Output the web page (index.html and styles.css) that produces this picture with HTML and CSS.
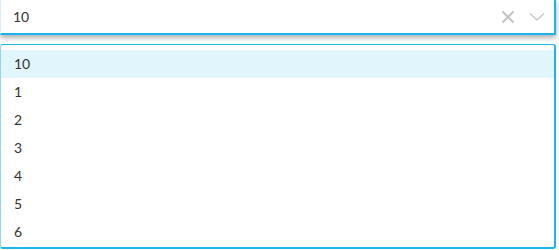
FILE: index.html
```html
<!DOCTYPE html>
<html lang="en">

<head>
  <meta charset="UTF-8" />
  <meta name="viewport" content="width=device-width, initial-scale=1.0" />
  <title>Select</title>
  <link rel="stylesheet" href="styles.css">
</head>

<body>
  <div class="select">
    <div class="select-input">
      <span class="value">10</span>
      <span class="icons">
        <svg class="clear" width="14" height="14" viewBox="0 0 14 14">
          <path d="M1.5 1.5 L12.5 12.5 M12.5 1.5 L1.5 12.5" stroke="#c4c4c4" stroke-width="2" fill="none" />
        </svg>
        <svg class="arrow" width="16" height="10" viewBox="0 0 16 10">
          <path d="M1 1.5 L8 8 L15 1.5" stroke="#c8c8c8" stroke-width="1.4" fill="none" />
        </svg>
      </span>
    </div>

    <ul class="options">
      <li class="active">10</li>
      <li>1</li>
      <li>2</li>
      <li>3</li>
      <li>4</li>
      <li>5</li>
      <li>6</li>
    </ul>
  </div>
</body>

</html>
```

FILE: styles.css
```css
body {
  margin: 0;
  background: #fff;
  font-family: Lato, "Open Sans", sans-serif;
  font-size: 14px;
  color: #333;
}

.select {
  width: 556px;
}

.select-input {
  box-sizing: border-box;
  height: 36px;
  margin-top: -1px;
  display: flex;
  align-items: center;
  justify-content: space-between;
  padding: 0 9px 0 12px;
  border: 1px solid #d8eef8;
  border-right: 2px solid #1cb4ea;
  border-bottom: 2px solid #1cb4ea;
  box-shadow: 0 3px 5px rgba(0, 0, 0, 0.3);
}

.icons {
  display: flex;
  align-items: center;
  gap: 14px;
}

.options {
  box-sizing: border-box;
  list-style: none;
  margin: 9px 0 0;
  padding: 5px 0 1px;
  height: 205px;
  border: 1px solid #1cb4ea;
  border-left-color: #8fd8f3;
  border-right-width: 2px;
  border-bottom-width: 2px;
  border-radius: 3px;
}

.options li {
  height: 28px;
  line-height: 28px;
  padding-left: 13px;
}

.options li.active {
  background: #e0f5fc;
}
```
